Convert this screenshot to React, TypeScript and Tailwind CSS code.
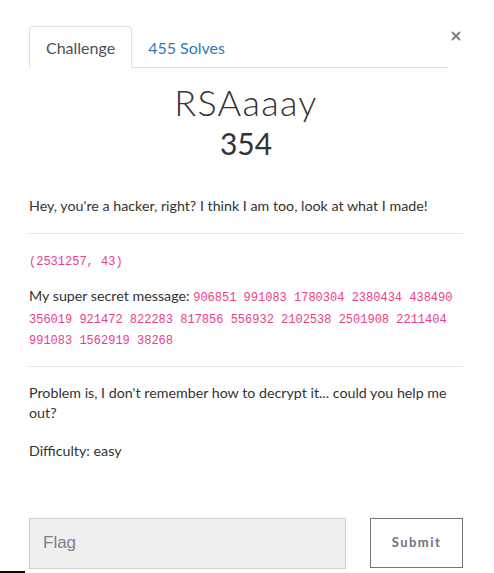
import { X } from 'lucide-react'

const Code = ({ children }: { children: React.ReactNode }) => (
  <code className="font-['Liberation_Mono',monospace] text-[12px] leading-none text-[#e83e8c]">{children}</code>
)

const App = () => {
  return (
    <div className="relative h-[573px] w-[494px] overflow-hidden bg-white font-['Lato',sans-serif] text-[#333]">
      <div className="pl-[29px] pr-[31px] pt-[26px]">
        <div className="flex items-start">
          <div className="flex flex-1 border-b border-[#dee2e6]">
            <div className="-mb-px h-[42px] rounded-t border border-b-white border-[#dee2e6] bg-white px-4 pt-[9px] text-[16px] text-[#495057]">
              Challenge
            </div>
            <div className="h-[41px] px-4 pt-[10px] text-[16px] text-[#337ab7]">455 Solves</div>
          </div>
          <button className="mt-[3px] text-[#808080]">
            <X size={14} strokeWidth={3.4} />
          </button>
        </div>

        <h1 className="mt-[14px] text-center text-[36px] leading-[40px] font-light tracking-[1.3px]">RSAaaay</h1>
        <h2 className="mt-[3px] text-center text-[30px] leading-[36px]">354</h2>

        <p className="mt-[34px] text-[14.25px] leading-[22px]">
          Hey, you're a hacker, right? I think I am too, look at what I made!
        </p>
        <hr className="mt-[16px] border-[#e5e5e5]" />

        <p className="mt-[15px] leading-[20px]">
          <Code>(2531257, 43)</Code>
        </p>
        <p className="mt-[16px] text-[14.25px] leading-[21.5px]">
          My super secret message:{' '}
          <Code>
            906851 991083 1780304 2380434 438490 356019 921472 822283 817856 556932 2102538 2501908 2211404 991083
            1562919 38268
          </Code>
        </p>
        <hr className="mt-[16px] border-[#e5e5e5]" />

        <p className="mt-[16px] text-[14.25px] leading-[20px]">
          Problem is, I don't remember how to decrypt it... could you help me out?
        </p>
        <p className="mt-[18px] text-[14.25px] leading-[20px]">Difficulty: easy</p>

        <div className="mt-[57px] flex gap-[24px]">
          <input
            placeholder="Flag"
            className="h-[51px] w-[317px] border border-[#ccd1d6] bg-[#efefef] px-[13px] font-['Liberation_Sans',sans-serif] text-[17px] placeholder:text-[#7b8289] outline-none"
          />
          <button className="h-[50px] flex-1 border border-[#6c757d] bg-white text-[13px] font-bold tracking-[1.5px] text-[#6c757d]">
            Submit
          </button>
        </div>
      </div>
      <div className="absolute bottom-0 left-0 h-[2px] w-[25px] bg-black" />
    </div>
  )
}

export default App
